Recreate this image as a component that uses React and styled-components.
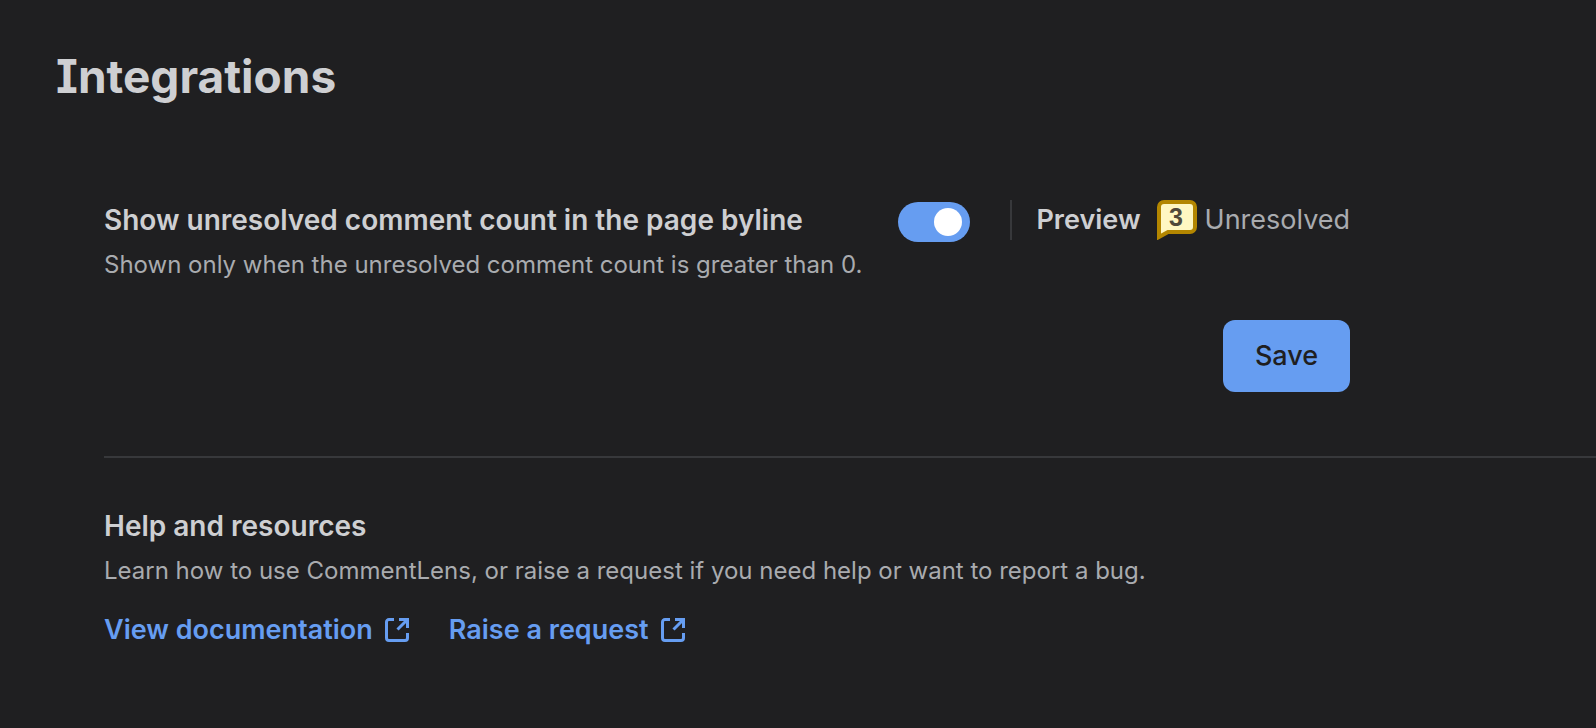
import React, { useState } from "react";
import styled, { createGlobalStyle } from "styled-components";

const GlobalStyle = createGlobalStyle`
  :root {
    --surface: #1f1f21;
    --border: #37383b;
    --text: #cecfd2;
    --text-subtle: #a9abaf;
    --blue: #669df1;
  }

  * {
    box-sizing: border-box;
  }

  body {
    margin: 0;
    background: var(--surface);
    color: var(--text);
    font-family: Inter, "Liberation Sans", sans-serif;
    font-size: 27px;
    line-height: 40px;
  }
`;

const Page = styled.main`
  padding: 48px 0 48px 56px;
`;

const PageTitle = styled.h1`
  margin: 0 0 96px;
  font-size: 46px;
  font-weight: 700;
  line-height: 56px;
  font-feature-settings: "cv08";
`;

const Content = styled.div`
  padding-left: 48px;
`;

const SettingsForm = styled.form`
  display: flex;
  flex-direction: column;
  align-items: flex-end;
  gap: 38px;
  width: fit-content;
`;

const SettingRow = styled.div`
  display: flex;
  align-items: flex-start;
  gap: 36px;
`;

const SettingText = styled.div`
  display: flex;
  flex-direction: column;
  gap: 8px;
`;

const SettingLabel = styled.label`
  font-size: 28px;
  font-weight: 600;
`;

const Description = styled.p`
  margin: 0;
  color: var(--text-subtle);
  font-size: 24px;
  line-height: 34px;
`;

const Controls = styled.div`
  display: flex;
  align-items: flex-start;
  gap: 40px;
`;

const Toggle = styled.input`
  appearance: none;
  display: flex;
  align-items: center;
  justify-content: ${props => (props.checked ? "flex-end" : "flex-start")};
  flex-shrink: 0;
  width: 72px;
  height: 40px;
  margin: 2px 0 0;
  padding: 0 8px;
  border-radius: 20px;
  background: ${props => (props.checked ? "var(--blue)" : "#7e8188")};
  cursor: pointer;

  &::before {
    content: "";
    width: 28px;
    height: 28px;
    border-radius: 50%;
    background: #fff;
  }
`;

const Preview = styled.div`
  display: flex;
  align-items: center;
  height: 40px;
  padding-left: 24px;
  border-left: 2px solid var(--border);
`;

const PreviewLabel = styled.span`
  margin-right: 16px;
  font-weight: 600;
`;

const Byline = styled.span`
  display: flex;
  align-items: center;
  gap: 8px;
  color: var(--text-subtle);
`;

const SaveButton = styled.button`
  height: 72px;
  padding: 0 32px;
  border: none;
  border-radius: 12px;
  background: var(--blue);
  color: #1f1f21;
  font: inherit;
  font-weight: 500;
  cursor: pointer;
`;

const Divider = styled.hr`
  height: 2px;
  margin: 64px 0 48px;
  border: none;
  background: var(--border);
`;

const Help = styled.section`
  display: flex;
  flex-direction: column;
  gap: 8px;
`;

const HelpTitle = styled.h2`
  margin: 0;
  font-size: 28px;
  font-weight: 600;
`;

const LinkList = styled.nav`
  display: flex;
  gap: 40px;
  padding-top: 14px;
`;

const HelpLink = styled.a`
  display: flex;
  align-items: center;
  gap: 12px;
  color: var(--blue);
  font-weight: 600;
  text-decoration: none;
`;

const CommentBadge = ({ count }) => (
  <svg width="40" height="40" viewBox="0 0 40 40">
    <path
      d="M2 37V7a5 5 0 0 1 5-5h26a5 5 0 0 1 5 5v20a5 5 0 0 1-5 5H11z"
      fill="#fff7c2"
      stroke="#b38600"
      strokeWidth="4"
    />
    <text
      x="19"
      y="26"
      textAnchor="middle"
      fontFamily="'Liberation Sans', sans-serif"
      fontSize="25"
      fontWeight="700"
      fill="#50493a"
    >
      {count}
    </text>
  </svg>
);

const ExternalIcon = () => (
  <svg
    width="24"
    height="24"
    viewBox="0 0 24 24"
    fill="none"
    stroke="currentColor"
    strokeWidth="3"
    aria-hidden="true"
  >
    <path d="M9 1.5H4A2.5 2.5 0 0 0 1.5 4v16A2.5 2.5 0 0 0 4 22.5h16a2.5 2.5 0 0 0 2.5-2.5v-5" />
    <path d="M14 1.5h8.5V10M22 2 12.5 11.5" />
  </svg>
);

const links = [
  { label: "View documentation", href: "#documentation" },
  { label: "Raise a request", href: "#request" }
];

const App = () => {
  const [showCount, setShowCount] = useState(true);

  const handleSubmit = event => {
    event.preventDefault();
  };

  return (
    <Page>
      <GlobalStyle />
      <PageTitle>Integrations</PageTitle>
      <Content>
        <SettingsForm onSubmit={handleSubmit}>
          <SettingRow>
            <SettingText>
              <SettingLabel htmlFor="show-count">
                Show unresolved comment count in the page byline
              </SettingLabel>
              <Description id="show-count-hint">
                Shown only when the unresolved comment count is greater than 0.
              </Description>
            </SettingText>
            <Controls>
              <Toggle
                id="show-count"
                type="checkbox"
                aria-describedby="show-count-hint"
                checked={showCount}
                onChange={event => setShowCount(event.target.checked)}
              />
              <Preview>
                <PreviewLabel>Preview</PreviewLabel>
                <Byline>
                  <CommentBadge count={3} />
                  Unresolved
                </Byline>
              </Preview>
            </Controls>
          </SettingRow>
          <SaveButton type="submit">Save</SaveButton>
        </SettingsForm>
        <Divider />
        <Help>
          <HelpTitle>Help and resources</HelpTitle>
          <Description>
            Learn how to use CommentLens, or raise a request if you need help or want to report a bug.
          </Description>
          <LinkList>
            {links.map(link => (
              <HelpLink key={link.label} href={link.href}>
                {link.label}
                <ExternalIcon />
              </HelpLink>
            ))}
          </LinkList>
        </Help>
      </Content>
    </Page>
  );
};

export default App;
